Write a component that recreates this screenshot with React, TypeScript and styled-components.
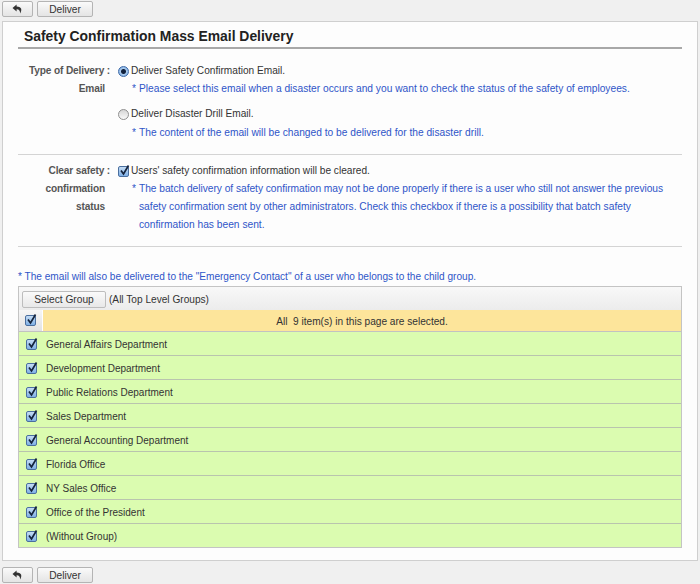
import styled, { createGlobalStyle } from "styled-components"

const GlobalStyle = createGlobalStyle`
  html, body {
    margin: 0;
    padding: 0;
    background: #f0f0f0;
    font-family: "Liberation Sans", Arial, sans-serif;
    font-size: 10.15px;
    color: #333;
  }
`

const Page = styled.div`
  width: 700px;
  height: 584px;
  overflow: hidden;
  display: flex;
  flex-direction: column;
`

const Toolbar = styled.div<{ $bottom?: boolean }>`
  display: flex;
  gap: 4px;
  height: 16px;
  padding: ${(p) => (p.$bottom ? "6px 0 0 2px" : "1px 0 0 2px")};
`

const ToolButton = styled.button<{ $wide?: boolean }>`
  width: ${(p) => (p.$wide ? "56px" : "31px")};
  height: 16px;
  padding: 0;
  display: flex;
  align-items: center;
  justify-content: center;
  border: 1px solid #b4b4b4;
  border-radius: 2px;
  background: linear-gradient(#fafafa, #e4e4e4);
  font: 10.2px "Liberation Sans", Arial, sans-serif;
  color: #333;
`

const Panel = styled.div`
  height: 538px;
  margin: 4px 2px 0 2px;
  padding: 0 15px;
  background: #fdfdfd;
  border: 1px solid #cfcfcf;
`

const Title = styled.h1`
  margin: 0;
  height: 25px;
  padding: 0 0 0 6px;
  border-bottom: 2px solid #a8a8a8;
  font-size: 13.9px;
  line-height: 29px;
  font-weight: bold;
  color: #222;
`

const Section = styled.div<{ $height: number; $top: number }>`
  display: flex;
  height: ${(p) => p.$height}px;
  padding-top: ${(p) => p.$top}px;
  border-bottom: 1px solid #d4d4d4;
  line-height: 18px;
`

const LabelCol = styled.div`
  width: 92px;
  flex: none;
  font-size: 10.15px;
  letter-spacing: -0.15px;
  font-weight: bold;
  color: #555;
  line-height: 18px;
`

const Label = styled.div<{ $inset?: number }>`
  padding-right: ${(p) => p.$inset ?? 0}px;
  text-align: right;
`

const FieldCol = styled.div`
  flex: 1;
  padding-left: 8px;
`

const Option = styled.div`
  display: flex;
  align-items: center;
  gap: 2px;
  height: 18px;
`

const Note = styled.div<{ $drop?: number }>`
  position: relative;
  margin-top: ${(p) => p.$drop ?? 0}px;
  padding-left: 21px;
  margin-bottom: 7px;
  color: #2f55c8;
  font-size: 10.22px;
  white-space: nowrap;
`

const NoteMark = styled.span`
  position: absolute;
  left: 14px;
`

const TightLine = styled.span`
  letter-spacing: -0.035px;
`

const Radio = styled.span<{ $on?: boolean }>`
  width: 11px;
  height: 11px;
  flex: none;
  border-radius: 50%;
  box-sizing: border-box;
  border: 1px solid ${(p) => (p.$on ? "#3d6aa8" : "#8f8f8f")};
  background: ${(p) =>
    p.$on
      ? "radial-gradient(circle, #10203c 0 2px, #a9cbee 3px, #6fa0dc 6px)"
      : "linear-gradient(#d6d6d6, #fafafa)"};
`

const CheckBox = styled.span`
  width: 11px;
  height: 11px;
  flex: none;
  position: relative;
  box-sizing: border-box;
  border: 1px solid #4a6f9f;
  border-radius: 2px;
  background: linear-gradient(#c4dcf4, #7fb0e6);
`

const Tick = styled.svg`
  position: absolute;
  left: -1px;
  top: -3px;
  width: 13px;
  height: 13px;
`

const EmailNote = styled.div`
  margin-top: 22px;
  height: 17px;
  line-height: 15px;
  font-size: 10.1px;
  color: #2f55c8;
`

const GroupTable = styled.div`
  border: 1px solid #c4c4c4;
`

const GroupHeader = styled.div`
  display: flex;
  align-items: center;
  gap: 3px;
  height: 22px;
  padding: 1px 0 0 3px;
  background: linear-gradient(#f8f8f8, #ececec);
`

const SelectButton = styled.button`
  width: 84px;
  height: 17px;
  padding: 0;
  border: 1px solid #bdbdbd;
  border-radius: 2px;
  background: linear-gradient(#fafafa, #e8e8e8);
  font: 10.2px "Liberation Sans", Arial, sans-serif;
  color: #333;
`

const SelectedRow = styled.div`
  display: flex;
  height: 21px;
  border-bottom: 1px solid #c2c2c2;
`

const CheckCell = styled.div`
  width: 23px;
  flex: none;
  display: flex;
  align-items: center;
  justify-content: center;
  background: linear-gradient(#f6f6f6, #e2e2e2);
  border-right: 1px solid #fff;
`

const SelectedText = styled.div`
  flex: 1;
  background: #fde59b;
  text-align: center;
  line-height: 23px;
  color: #333;
  white-space: pre;
`

const GroupRow = styled.div`
  display: flex;
  align-items: center;
  height: 22px;
  padding-top: 1px;
  background: #dbfcb0;
  border-bottom: 1px solid #b9c4ae;
  font-size: 10px;
  &:last-child {
    border-bottom: none;
  }
`

const RowCheck = styled.div`
  width: 24px;
  margin-right: 3px;
  flex: none;
  display: flex;
  justify-content: center;
`

const groups = [
  "General Affairs Department",
  "Development Department",
  "Public Relations Department",
  "Sales Department",
  "General Accounting Department",
  "Florida Office",
  "NY Sales Office",
  "Office of the President",
  "(Without Group)",
]

function BackIcon() {
  return (
    <svg width="11" height="10" viewBox="0 0 11 10">
      <path d="M4.6 0.5 L0.5 4 L4.6 7.5 V5.3 C6.8 5.2 8 6.2 8.2 9.5 C10 6.5 10.2 2.6 4.6 2.6 Z" fill="#333" />
    </svg>
  )
}

function Check() {
  return (
    <CheckBox>
      <Tick viewBox="0 0 13 13">
        <path d="M3 6.5 L5.5 10 L10.5 1.5" fill="none" stroke="#14233c" strokeWidth="1.7" />
      </Tick>
    </CheckBox>
  )
}

function Buttons({ bottom }: { bottom?: boolean }) {
  return (
    <Toolbar $bottom={bottom}>
      <ToolButton>
        <BackIcon />
      </ToolButton>
      <ToolButton $wide>Deliver</ToolButton>
    </Toolbar>
  )
}

export default function App() {
  return (
    <Page>
      <GlobalStyle />
      <Buttons />
      <Panel>
        <Title>Safety Confirmation Mass Email Delivery</Title>
        <Section $height={92} $top={13}>
          <LabelCol>
            <Label>Type of Delivery :</Label>
            <Label $inset={5}>Email</Label>
          </LabelCol>
          <FieldCol>
            <Option>
              <Radio $on />
              Deliver Safety Confirmation Email.
            </Option>
            <Note>
              <NoteMark>*</NoteMark>Please select this email when a disaster occurs and you want to check the status of the safety of employees.
            </Note>
            <Option>
              <Radio />
              Deliver Disaster Drill Email.
            </Option>
            <Note $drop={1}>
              <NoteMark>*</NoteMark>The content of the email will be changed to be delivered for the disaster drill.
            </Note>
          </FieldCol>
        </Section>
        <Section $height={84} $top={7}>
          <LabelCol>
            <Label>Clear safety :</Label>
            <Label $inset={5}>confirmation</Label>
            <Label $inset={5}>status</Label>
          </LabelCol>
          <FieldCol>
            <Option>
              <Check />
              Users' safety confirmation information will be cleared.
            </Option>
            <Note>
              <NoteMark>*</NoteMark>
              <TightLine>The batch delivery of safety confirmation may not be done properly if there is a user who still not answer the previous</TightLine>
              <br />
              safety confirmation sent by other administrators. Check this checkbox if there is a possibility that batch safety
              <br />
              confirmation has been sent.
            </Note>
          </FieldCol>
        </Section>
        <EmailNote>* The email will also be delivered to the "Emergency Contact" of a user who belongs to the child group.</EmailNote>
        <GroupTable>
          <GroupHeader>
            <SelectButton>Select Group</SelectButton>
            (All Top Level Groups)
          </GroupHeader>
          <SelectedRow>
            <CheckCell>
              <Check />
            </CheckCell>
            <SelectedText>All  9 item(s) in this page are selected.</SelectedText>
          </SelectedRow>
          {groups.map((g) => (
            <GroupRow key={g}>
              <RowCheck>
                <Check />
              </RowCheck>
              {g}
            </GroupRow>
          ))}
        </GroupTable>
      </Panel>
      <Buttons bottom />
    </Page>
  )
}
